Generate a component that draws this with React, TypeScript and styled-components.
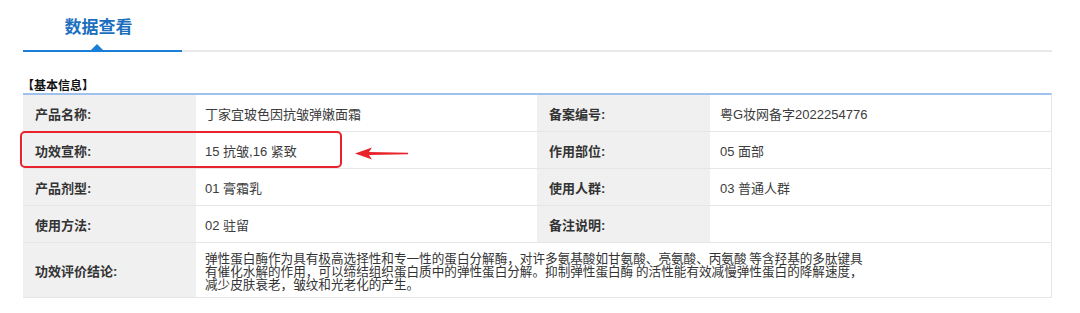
import React from "react";
import styled, { createGlobalStyle } from "styled-components";

const Global = createGlobalStyle`
  html, body { margin: 0; padding: 0; background: #ffffff; }
  body { font-family: "Liberation Sans", "Noto Sans CJK SC", sans-serif; }
`;

const Page = styled.div`
  padding: 0 28px 0 23px;
  width: 1080px;
  box-sizing: border-box;
`;

const TabBar = styled.div`
  display: flex;
  border-bottom: 2px solid #e8e8e8;
`;

const Tab = styled.div`
  position: relative;
  width: 151px;
  height: 50px;
  margin-bottom: -2px;
  border-bottom: 2px solid #1b7fd8;
  display: flex;
  align-items: center;
  justify-content: center;
  padding-right: 8px;
  box-sizing: content-box;
  font-family: "Noto Sans CJK SC", sans-serif;
  font-size: 17px;
  font-weight: 700;
  color: #1c6fbe;
  &::after {
    content: "";
    position: absolute;
    left: 68px;
    bottom: 0;
    border-left: 6px solid transparent;
    border-right: 6px solid transparent;
    border-bottom: 6px solid #1b7fd8;
  }
`;

const SectionTitle = styled.div`
  margin-top: 25px;
  height: 16px;
  line-height: 16px;
  font-family: "Noto Sans CJK SC", sans-serif;
  font-size: 12px;
  font-weight: 700;
  color: #111;
  margin-left: -1px;
`;

const TableWrap = styled.div`
  position: relative;
`;

const Grid = styled.div`
  display: grid;
  grid-template-columns: 173px 341px 173px 1fr;
  border-top: 2px solid #9ec2ec;
  border-right: 1px solid #e6e6e6;
`;

const Cell = styled.div<{ $label?: boolean; $tall?: boolean; $span?: number; $wide?: boolean }>`
  box-sizing: border-box;
  height: ${(p) => (p.$tall ? "55px" : "37px")};
  border-bottom: 1px solid #e6e6e6;
  ${(p) => (p.$span ? `grid-column: span ${p.$span};` : "")}
  display: flex;
  align-items: center;
  padding-left: ${(p) => (p.$label ? "12px" : p.$wide ? "10px" : "9px")};
  background: ${(p) => (p.$label ? "#f0f0f0" : "#ffffff")};
  font-size: 13px;
  font-weight: ${(p) => (p.$label ? 600 : 400)};
  color: ${(p) => (p.$label ? "#333333" : "#3c3c3c")};
  white-space: nowrap;
`;

const Paragraph = styled.div`
  font-family: "Noto Sans CJK SC", sans-serif;
  font-size: 12.6px;
  line-height: 13px;
  color: #333;
  white-space: nowrap;
`;

const Highlight = styled.div`
  position: absolute;
  left: -3px;
  top: 38px;
  width: 322px;
  height: 37px;
  box-sizing: border-box;
  border: 2px solid #e8232b;
  border-radius: 5px;
  pointer-events: none;
`;

const Arrow = styled.svg`
  position: absolute;
  left: 332px;
  top: 54px;
`;

const rows: [string, string, string, string][] = [
  ["产品名称:", "丁家宜玻色因抗皱弹嫩面霜", "备案编号:", "粤G妆网备字2022254776"],
  ["功效宣称:", "15 抗皱,16 紧致", "作用部位:", "05 面部"],
  ["产品剂型:", "01 膏霜乳", "使用人群:", "03 普通人群"],
  ["使用方法:", "02 驻留", "备注说明:", ""],
];

export default function App() {
  return (
    <Page>
      <Global />
      <TabBar>
        <Tab>数据查看</Tab>
      </TabBar>
      <SectionTitle>【基本信息】</SectionTitle>
      <TableWrap>
        <Grid>
          {rows.map((r, i) => (
            <React.Fragment key={i}>
              <Cell $label>{r[0]}</Cell>
              <Cell>{r[1]}</Cell>
              <Cell $label>{r[2]}</Cell>
              <Cell $wide>{r[3]}</Cell>
            </React.Fragment>
          ))}
          <Cell $label $tall>功效评价结论:</Cell>
          <Cell $tall $span={3}>
            <Paragraph>
              弹性蛋白酶作为具有极高选择性和专一性的蛋白分解酶，对许多氨基酸如甘氨酸、亮氨酸、丙氨酸 等含羟基的多肽键具
              <br />
              有催化水解的作用，可以缔结组织蛋白质中的弹性蛋白分解。抑制弹性蛋白酶 的活性能有效减慢弹性蛋白的降解速度，
              <br />
              减少皮肤衰老，皱纹和光老化的产生。
            </Paragraph>
          </Cell>
        </Grid>
        <Highlight />
        <Arrow width="53" height="13" viewBox="0 0 53 13">
          <path d="M0 6.5 L17 0.5 L14 5 L53 5.8 L53 7.2 L14 8 L17 12.5 Z" fill="#e8232b" />
        </Arrow>
      </TableWrap>
    </Page>
  );
}
